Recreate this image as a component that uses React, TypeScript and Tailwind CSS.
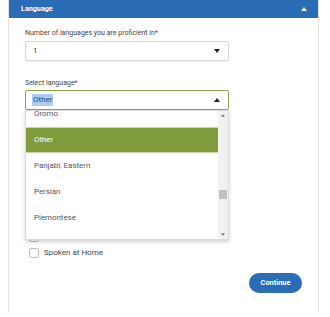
import React from "react"

const items = ["Oromo", "Other", "Panjabi, Eastern", "Persian", "Piemontese", "Pulaar"]

function Caret({ up, className }: { up?: boolean; className?: string }) {
  return (
    <svg width="6" height="4" viewBox="0 0 6 4" className={className}>
      {up ? <path d="M0 4 L3 0 L6 4 Z" fill="currentColor" /> : <path d="M0 0 L6 0 L3 4 Z" fill="currentColor" />}
    </svg>
  )
}

function Checkbox({ label }: { label: string }) {
  return (
    <label className="h-[12px] flex items-center gap-[5px] pl-[4px]">
      <span className="w-[10px] h-[10px] rounded-[2px] border border-[#bdbdbd] bg-white" />
      <span className="text-[8px] leading-[12px] text-[#444]">{label}</span>
    </label>
  )
}

export default function App() {
  return (
    <div className="w-[330px] h-[317px] bg-white overflow-hidden" style={{ fontFamily: "Roboto, 'Liberation Sans', sans-serif" }}>
      <div className="ml-[8px] w-[311px] h-[312px] border-x border-[#e2e2e2]">
        <div className="h-[18px] bg-[#2b6cb7] flex items-center justify-between pl-[12px] pr-[11px]">
          <span className="text-[7.2px] font-bold text-white">Language</span>
          <Caret up className="text-white" />
        </div>

        <div className="px-[16px] pt-[10px]">
          <p className="text-[7px] leading-[11px] text-[#444]">
            Number of languages you are proficient in<span className="text-[#d0021b]">*</span>
          </p>
          <div className="mt-[2px] w-[204px] h-[20px] border border-[#d6d6d6] rounded-[2px] flex items-center justify-between pl-[7px] pr-[8px] shadow-[0_1px_1px_rgba(0,0,0,0.05)]">
            <span className="text-[8px] text-[#333]">1</span>
            <Caret className="text-[#222]" />
          </div>

          <p className="mt-[17px] text-[7px] leading-[11px] text-[#444]">
            Select language<span className="text-[#d0021b]">*</span>
          </p>
          <div className="relative mt-[1px] w-[204px]">
            <div className="h-[20px] border border-[#8ba548] rounded-[2px] flex items-center justify-between pl-[6px] pr-[8px]">
              <span className="text-[8px] leading-[12px] px-[1px] bg-[#aecbf2] text-[#21468f]">Other</span>
              <Caret up className="text-[#222]" />
            </div>

            <div className="absolute left-0 top-full z-10 w-[204px] h-[130px] bg-white border border-[#dcdcdc] shadow-[0_2px_4px_rgba(0,0,0,0.18)] flex overflow-hidden">
              <div className="flex-1 overflow-hidden">
                <div className="-mt-[10px]">
                  {items.map((it) => (
                    <div
                      key={it}
                      className={
                        it === "Other"
                          ? "h-[26px] flex items-center pl-[8px] text-[7.9px] text-white bg-[#7f9b3b] border-y border-[#c9d6a3]"
                          : "h-[26px] flex items-center pl-[8px] text-[7.9px] text-[#555]"
                      }
                    >
                      {it}
                    </div>
                  ))}
                </div>
              </div>
              <div className="w-[10px] bg-[#f1f1f1] flex flex-col items-center justify-between py-[3px]">
                <Caret up className="text-[#777] w-[4px] h-[3px]" />
                <div className="flex-1 w-full flex flex-col pt-[73px]">
                  <div className="mx-[1px] h-[9px] bg-[#c1c1c1]" />
                </div>
                <Caret className="text-[#777] w-[4px] h-[3px]" />
              </div>
            </div>
          </div>

          <div className="mt-[121px] flex flex-col gap-[4px]">
            <Checkbox label="Is Native" />
            <Checkbox label="Spoken at Home" />
          </div>

          <div className="mt-[14px] flex justify-end">
            <button className="w-[53px] h-[20px] rounded-full bg-[#2b6cb7] text-white text-[7.4px] font-bold">Continue</button>
          </div>
        </div>
      </div>
    </div>
  )
}
